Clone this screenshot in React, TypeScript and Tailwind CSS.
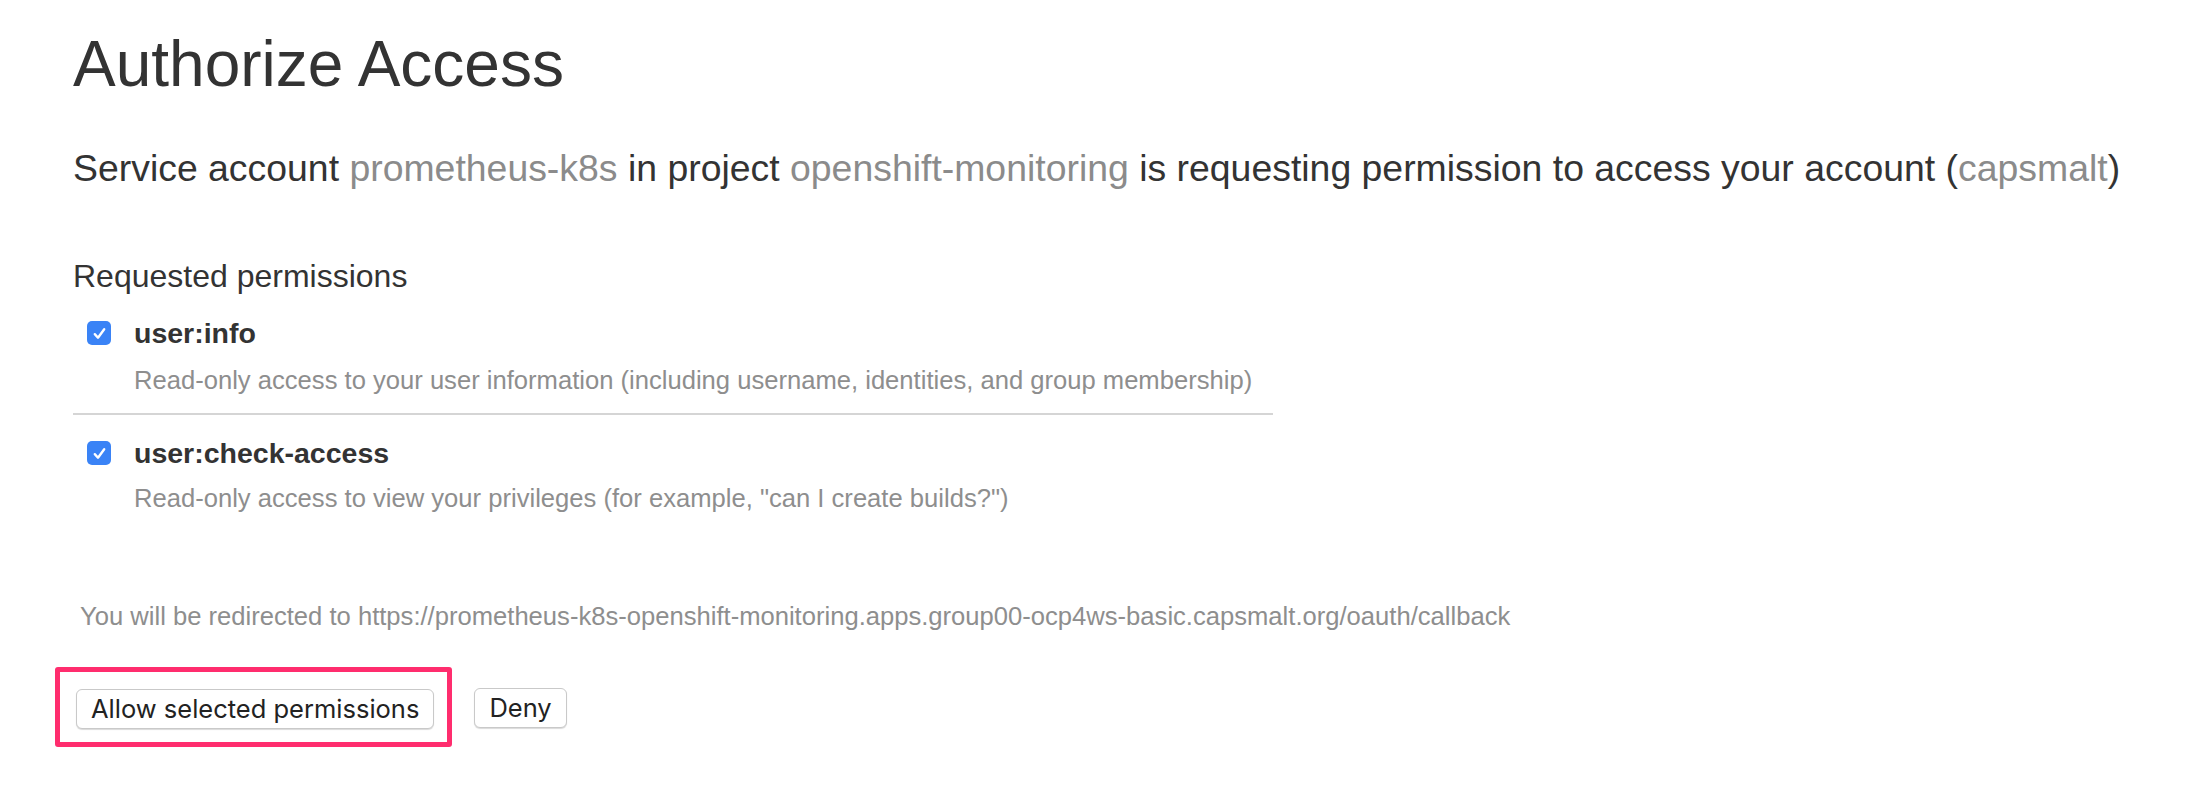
import React from "react";

function Check() {
  return (
    <div className="mt-[5px] flex h-[24px] w-[24px] shrink-0 items-center justify-center rounded-[5px] bg-[#3a83f6]">
      <svg width="15" height="15" viewBox="0 0 14 14" fill="none">
        <path d="M2.6 7.6 L5.6 10.9 L11.4 3" stroke="#fff" strokeWidth="2.2" strokeLinecap="round" strokeLinejoin="round" />
      </svg>
    </div>
  );
}

function Perm({ name, desc, gap }: { name: string; desc: string; gap: string }) {
  return (
    <div className="flex">
      <div className="ml-[14px]">
        <Check />
      </div>
      <div className="ml-[23px] flex flex-col">
        <div className="text-[28.5px] leading-[34px] font-bold text-[#333]">{name}</div>
        <div className={`${gap} text-[25.6px] leading-[30px] text-[#8e8e8e]`}>{desc}</div>
      </div>
    </div>
  );
}

export default function App() {
  return (
    <div className="min-h-screen bg-white pl-[73px] pt-[29px] font-['Liberation_Sans',Arial,sans-serif] text-[#333]">
      <h1 className="text-[64px] leading-[70px] font-normal">Authorize Access</h1>
      <p className="mt-[47px] whitespace-nowrap text-[37.4px] leading-[44px]">
        Service account <span className="text-[#8b8b8b]">prometheus-k8s</span> in project{" "}
        <span className="text-[#8b8b8b]">openshift-monitoring</span> is requesting permission to access your account (
        <span className="text-[#8b8b8b]">capsmalt</span>)
      </p>
      <h3 className="mt-[67px] text-[32px] leading-[38px]">Requested permissions</h3>
      <div className="mt-[21px] w-[1200px]">
        <Perm
          name="user:info"
          desc="Read-only access to your user information (including username, identities, and group membership)"
          gap="mt-[15px]"
        />
        <div className="mt-[18px] h-[2px] bg-[#d5d5d5]" />
        <div className="mt-[21px]">
          <Perm
            name="user:check-access"
            desc={'Read-only access to view your privileges (for example, "can I create builds?")'}
            gap="mt-[13px]"
          />
        </div>
      </div>
      <p className="ml-[7px] mt-[88px] whitespace-nowrap text-[25.6px] leading-[30px] text-[#8e8e8e]">
        You will be redirected to https://prometheus-k8s-openshift-monitoring.apps.group00-ocp4ws-basic.capsmalt.org/oauth/callback
      </p>
      <div className="mt-[36px] flex items-start">
        <div className="ml-[-18px] rounded-[3px] border-[5px] border-[#ff2d6e] pb-[13px] pl-[16px] pr-[13px] pt-[17px]">
          <button className="flex h-[40px] items-center rounded-[6px] border border-[#c9c9c9] bg-white px-[14px] font-['Inter',sans-serif] text-[25.5px] text-[#222] shadow-[0_1px_1px_rgba(0,0,0,0.15)]">
            Allow selected permissions
          </button>
        </div>
        <button className="ml-[22px] mt-[21px] flex h-[40px] items-center rounded-[6px] border border-[#c9c9c9] bg-white px-[14px] font-['Inter',sans-serif] text-[25.5px] text-[#222] shadow-[0_1px_1px_rgba(0,0,0,0.15)]">
          Deny
        </button>
      </div>
    </div>
  );
}
